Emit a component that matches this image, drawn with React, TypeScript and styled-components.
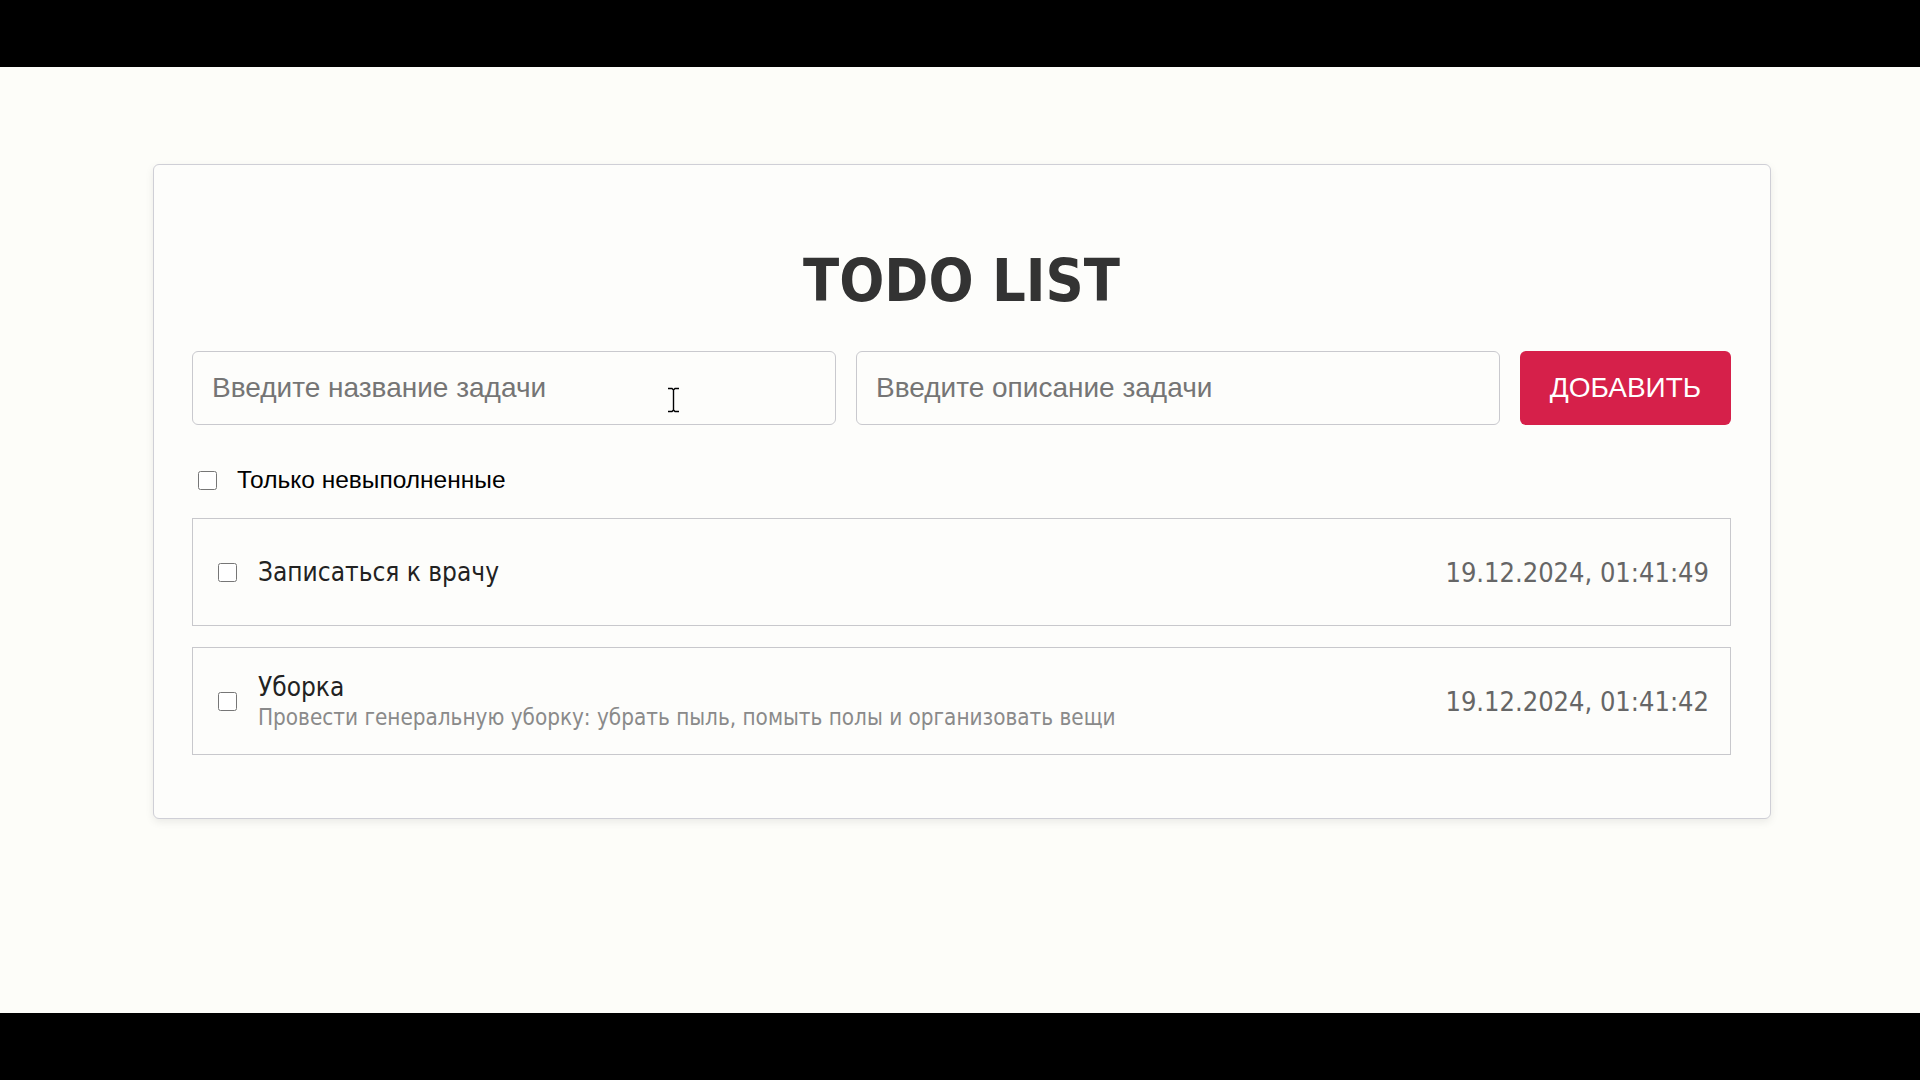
import React, { useState } from "react";
import styled, { createGlobalStyle } from "styled-components";

type Task = {
  id: number;
  title: string;
  description?: string;
  createdAt: string;
  done: boolean;
};

const initialTasks: Task[] = [
  {
    id: 2,
    title: "Записаться к врачу",
    createdAt: "19.12.2024, 01:41:49",
    done: false,
  },
  {
    id: 1,
    title: "Уборка",
    description:
      "Провести генеральную уборку: убрать пыль, помыть полы и организовать вещи",
    createdAt: "19.12.2024, 01:41:42",
    done: false,
  },
];

const App: React.FC = (): JSX.Element => {
  const [tasks, setTasks] = useState<Task[]>(initialTasks);
  const [onlyOpen, setOnlyOpen] = useState(false);

  const toggle = (id: number) =>
    setTasks((list) =>
      list.map((t) => (t.id === id ? { ...t, done: !t.done } : t))
    );

  const visible = onlyOpen ? tasks.filter((t) => !t.done) : tasks;

  return (
    <Frame>
      <GlobalStyle />
      <Screen>
        <Card>
          <Title>TODO LIST</Title>
          <Form>
            <Input placeholder="Введите название задачи" />
            <Input placeholder="Введите описание задачи" />
            <AddButton type="button">ДОБАВИТЬ</AddButton>
          </Form>
          <Filter>
            <Check
              type="checkbox"
              checked={onlyOpen}
              onChange={() => setOnlyOpen(!onlyOpen)}
            />
            <FilterLabel>Только невыполненные</FilterLabel>
          </Filter>
          <List>
            {visible.map((task) => (
              <Item key={task.id}>
                <ItemCheck
                  type="checkbox"
                  checked={task.done}
                  onChange={() => toggle(task.id)}
                />
                <ItemBody>
                  <ItemTitle>{task.title}</ItemTitle>
                  {task.description && (
                    <ItemDescription>{task.description}</ItemDescription>
                  )}
                </ItemBody>
                <ItemDate>{task.createdAt}</ItemDate>
              </Item>
            ))}
          </List>
        </Card>
      </Screen>
      <Cursor width="15" height="26" viewBox="0 0 15 26">
        <path
          d="M2 1.5h4l1.5 1.5L9 1.5h4M7.5 3v20M2 24.5h4l1.5-1.5 1.5 1.5h4"
          fill="none"
          stroke="#fff"
          strokeWidth="3"
        />
        <path
          d="M2 1.5h4l1.5 1.5L9 1.5h4M7.5 3v20M2 24.5h4l1.5-1.5 1.5 1.5h4"
          fill="none"
          stroke="#000"
          strokeWidth="1.4"
        />
      </Cursor>
    </Frame>
  );
};

const GlobalStyle = createGlobalStyle`
  html, body {
    margin: 0;
    padding: 0;
    background: #000;
  }
  * {
    box-sizing: border-box;
  }
`;

const Frame = styled.div`
  position: relative;
  width: 1920px;
  height: 1080px;
  padding: 67px 0;
  background: #000;
`;

const Screen = styled.main`
  height: 946px;
  padding: 97px 149px 0 153px;
  background: #fdfdf9;
`;

const Card = styled.section`
  padding: 40px 39px 40px 38px;
  background: #fdfdfb;
  border: 1px solid #cfcfd6;
  border-radius: 6px;
  box-shadow: 0 3px 8px rgba(0, 0, 0, 0.08);
  font-family: "DejaVu Sans Condensed", "DejaVu Sans", sans-serif;
  font-stretch: condensed;
`;

const Title = styled.h1`
  margin: 41px 0 35px;
  font-size: 59px;
  line-height: 70px;
  font-weight: 700;
  color: #333;
  text-align: center;
`;

const Form = styled.div`
  display: flex;
  gap: 20px;
  height: 74px;
`;

const Input = styled.input`
  flex: 1;
  min-width: 0;
  height: 74px;
  padding: 0 19px;
  border: 1px solid #c9c9ce;
  border-radius: 6px;
  background: #fdfdfb;
  font-family: "Liberation Sans", Arial, sans-serif;
  font-size: 28px;
  color: #333;
  outline: none;

  &::placeholder {
    color: #757575;
  }
`;

const AddButton = styled.button`
  width: 211px;
  height: 74px;
  border: none;
  border-radius: 6px;
  background: #d6204a;
  color: #fff;
  font-family: "Liberation Sans", Arial, sans-serif;
  font-size: 28px;
  cursor: pointer;
`;

const Filter = styled.label`
  display: flex;
  align-items: center;
  height: 36px;
  margin: 37px 0 20px;
  padding-left: 6px;
  gap: 20px;
  cursor: pointer;
`;

const Check = styled.input`
  width: 19px;
  height: 19px;
  margin: 0;
  flex-shrink: 0;
`;

const FilterLabel = styled.span`
  font-family: "Liberation Sans", Arial, sans-serif;
  font-size: 24.5px;
  color: #000;
`;

const List = styled.div`
  display: flex;
  flex-direction: column;
  gap: 21px;
  margin-bottom: 23px;
`;

const Item = styled.div`
  display: flex;
  align-items: center;
  min-height: 108px;
  padding: 0 21px 0 25px;
  border: 1px solid #c8c8cc;
  background: #fdfdfb;
`;

const ItemCheck = styled(Check)`
  margin-right: 21px;
`;

const ItemBody = styled.div`
  flex: 1;
  display: flex;
  flex-direction: column;
`;

const ItemTitle = styled.span`
  font-size: 26px;
  line-height: 30px;
  color: #222;
`;

const ItemDescription = styled.span`
  margin-top: 2px;
  font-size: 22.3px;
  line-height: 27px;
  color: #8a8a8a;
`;

const ItemDate = styled.span`
  font-size: 27px;
  color: #666;
  white-space: nowrap;
`;

const Cursor = styled.svg`
  position: absolute;
  left: 666px;
  top: 387px;
`;

export default App;
